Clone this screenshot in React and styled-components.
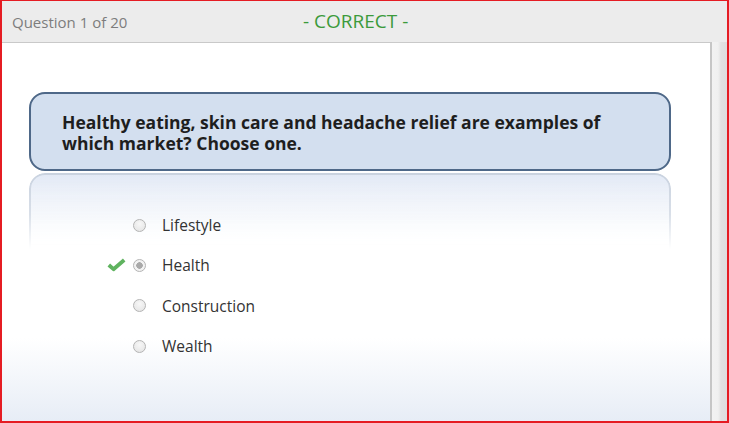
import styled, { createGlobalStyle } from 'styled-components';

const options = [
  { label: 'Lifestyle' },
  { label: 'Health', selected: true, correct: true },
  { label: 'Construction' },
  { label: 'Wealth' },
];

function Check() {
  return (
    <svg width="19" height="14" viewBox="0 0 19 14">
      <path d="M1.8 7 L6.5 11.2 L17.2 2" fill="none" stroke="#5fb35f" strokeWidth="3.8" strokeLinejoin="round" />
    </svg>
  );
}

function App() {
  return (
    <>
      <GlobalStyle />
      <Frame>
        <Header>
          <Title>Question 1 of 20</Title>
          <Status>- CORRECT -</Status>
        </Header>
        <Body>
          <Panel>
            <QuestionArea>
              <QuestionBox>
                Healthy eating, skin care and headache relief are examples of which market? Choose one.
              </QuestionBox>
              <Options>
                {options.map((o) => (
                  <Option key={o.label}>
                    <Mark>{o.correct && <Check />}</Mark>
                    <Radio $selected={o.selected} />
                    <Label>{o.label}</Label>
                  </Option>
                ))}
              </Options>
            </QuestionArea>
          </Panel>
          <Gutter />
        </Body>
      </Frame>
    </>
  );
}

const GlobalStyle = createGlobalStyle`
  html, body {
    margin: 0;
    padding: 0;
    background: #fff;
  }
  body {
    font-family: "Open Sans", "Liberation Sans", sans-serif;
  }
`
const Frame = styled.div`
  box-sizing: border-box;
  width: 729px;
  height: 423px;
  display: flex;
  flex-direction: column;
  background: #ececec;
  border: 2px solid #e51c23;
  border-top-width: 1px;
  overflow: hidden;
`
const Header = styled.div`
  display: flex;
  align-items: center;
  height: 41px;
  padding-left: 10px;
  flex-shrink: 0;
`
const Title = styled.div`
  width: 291px;
  font-size: 15px;
  color: #7d7d7d;
`
const Status = styled.div`
  font-size: 19px;
  color: #3b9a3b;
  margin-top: -2px;
`
const Body = styled.div`
  flex: 1;
  display: flex;
  min-height: 0;
`
const Panel = styled.div`
  flex: 1;
  background: linear-gradient(#ffffff 0%, #ffffff 78%, #e7edf6 100%);
  border-top: 1px solid #c9c9c9;
  border-right: 2px solid #c6c6c6;
  padding: 49px 39px 0 27px;
`
const Gutter = styled.div`
  width: 15px;
  background: linear-gradient(to right, #f2f2f2, #f0f0f0 40%, #e2e2e2 60%, #dedede);
`
const QuestionArea = styled.div`
  display: flex;
  flex-direction: column;
`
const QuestionBox = styled.div`
  box-sizing: border-box;
  height: 79px;
  border: 2px solid #4e6888;
  border-radius: 16px;
  background: #d3dfef;
  padding: 18px 60px 0 31px;
  font-size: 17.5px;
  font-weight: 700;
  line-height: 21px;
  color: #1e1e1e;
`
const Options = styled.div`
  position: relative;
  margin-top: 2px;
  padding: 32px 0 0 78px;
  display: flex;
  flex-direction: column;

  &::before {
    content: '';
    position: absolute;
    left: 0;
    right: 0;
    top: 0;
    height: 76px;
    box-sizing: border-box;
    border: 2px solid #c9d2df;
    border-bottom: none;
    border-radius: 16px 16px 0 0;
    background: linear-gradient(#e2e9f5, rgba(255, 255, 255, 0));
    -webkit-mask-image: linear-gradient(#000 0%, rgba(0, 0, 0, 0.7) 55%, transparent 100%);
    mask-image: linear-gradient(#000 0%, rgba(0, 0, 0, 0.7) 55%, transparent 100%);
  }
`
const Option = styled.div`
  position: relative;
  display: flex;
  align-items: center;
  height: 40.3px;
`
const Mark = styled.div`
  width: 20px;
  display: flex;
  align-items: center;
  margin-right: 6px;
  margin-top: -1px;
`
const Radio = styled.span`
  box-sizing: border-box;
  width: 13px;
  height: 13px;
  border-radius: 50%;
  border: 1px solid #b4b4b4;
  background: ${(p) =>
    p.$selected
      ? 'radial-gradient(circle, #a9a9a9 0, #a9a9a9 3px, #f2f2f2 3.5px)'
      : 'radial-gradient(circle at 50% 35%, #f7f7f7, #e2e2e2)'};
  margin-right: 16px;
`
const Label = styled.span`
  font-size: 15.5px;
  color: #333;
`

export default App
